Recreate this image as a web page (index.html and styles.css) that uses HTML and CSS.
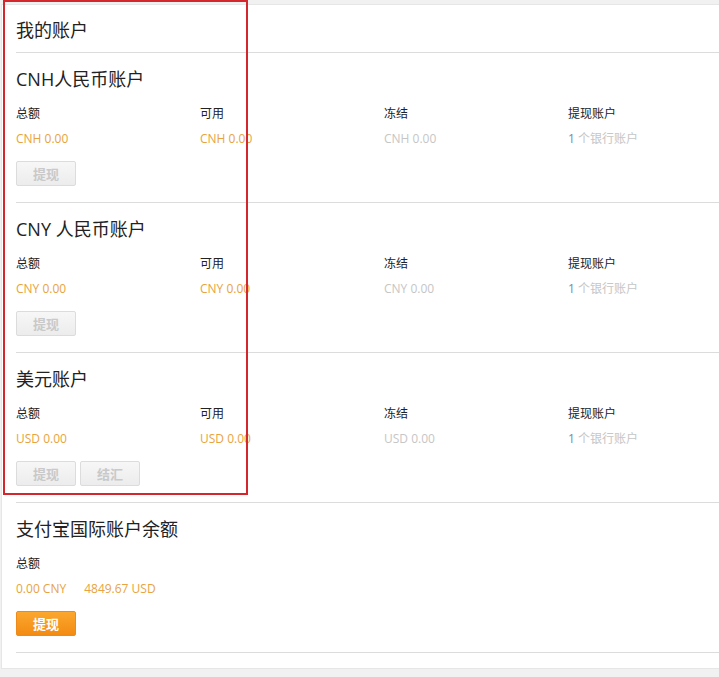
FILE: index.html
```html
<!DOCTYPE html>
<html lang="zh-CN">
<head>
<meta charset="utf-8">
<title>我的账户</title>
<link rel="stylesheet" href="styles.css">
</head>
<body>
<div class="panel">
  <div class="title">我的账户</div>

  <section class="acct">
    <h2 class="acct-name">CNH人民币账户</h2>
    <div class="grid">
      <div class="label">总额</div>
      <div class="label">可用</div>
      <div class="label">冻结</div>
      <div class="label">提现账户</div>
      <div class="val orange">CNH 0.00</div>
      <div class="val orange">CNH 0.00</div>
      <div class="val grey">CNH 0.00</div>
      <div class="val grey"><span class="num">1</span> 个银行账户</div>
    </div>
    <div class="btns"><span class="btn disabled">提现</span></div>
  </section>

  <section class="acct">
    <h2 class="acct-name">CNY 人民币账户</h2>
    <div class="grid">
      <div class="label">总额</div>
      <div class="label">可用</div>
      <div class="label">冻结</div>
      <div class="label">提现账户</div>
      <div class="val orange">CNY 0.00</div>
      <div class="val orange">CNY 0.00</div>
      <div class="val grey">CNY 0.00</div>
      <div class="val grey"><span class="num">1</span> 个银行账户</div>
    </div>
    <div class="btns"><span class="btn disabled">提现</span></div>
  </section>

  <section class="acct">
    <h2 class="acct-name">美元账户</h2>
    <div class="grid">
      <div class="label">总额</div>
      <div class="label">可用</div>
      <div class="label">冻结</div>
      <div class="label">提现账户</div>
      <div class="val orange">USD 0.00</div>
      <div class="val orange">USD 0.00</div>
      <div class="val grey">USD 0.00</div>
      <div class="val grey"><span class="num">1</span> 个银行账户</div>
    </div>
    <div class="btns"><span class="btn disabled">提现</span><span class="btn disabled">结汇</span></div>
  </section>

  <section class="acct">
    <h2 class="acct-name">支付宝国际账户余额</h2>
    <div class="label">总额</div>
    <div class="val orange totals"><span>0.00 CNY</span><span>4849.67 USD</span></div>
    <div class="btns"><span class="btn primary">提现</span></div>
  </section>
</div>
<div class="highlight"></div>
</body>
</html>
```

FILE: styles.css
```css
html, body {
  margin: 0;
  padding: 0;
}
body {
  background: #f1f1f1;
  font-family: "Open Sans", "Noto Sans CJK SC", sans-serif;
  color: #333;
  position: relative;
  height: 677px;
  overflow: hidden;
}
.panel {
  margin: 4px 0 0 1px;
  background: #fff;
  border: 1px solid #e6e6e6;
  border-right: none;
  padding: 0 0 15px 14px;
}
.title {
  font-size: 18px;
  line-height: 24px;
  padding: 13px 0 10px;
  border-bottom: 1px solid #dcdcdc;
  color: #222;
}
.acct {
  padding-bottom: 16px;
  border-bottom: 1px solid #dcdcdc;
}
.acct-name {
  margin: 14px 0 0;
  font-size: 18px;
  line-height: 24px;
  font-weight: normal;
  color: #222;
}
.grid {
  display: grid;
  grid-template-columns: repeat(4, 184px);
  row-gap: 7px;
  margin-top: 14px;
}
.acct > .label {
  margin-top: 14px;
}
.label {
  font-size: 12px;
  line-height: 18px;
  color: #222;
}
.val {
  font-size: 12px;
  line-height: 18px;
}
.totals {
  margin-top: 7px;
  display: flex;
  gap: 18px;
}
.orange { color: #e8a33e; }
.grey { color: #c6c6c6; }
.num { color: #6f8db0; }
.btns {
  display: flex;
  gap: 4px;
  margin-top: 13px;
}
.btn {
  box-sizing: border-box;
  width: 60px;
  height: 25px;
  line-height: 23px;
  text-align: center;
  font-size: 13px;
  font-weight: bold;
  border-radius: 2px;
  font-family: "Noto Sans CJK SC", sans-serif;
}
.btn.disabled {
  color: #c9c9c9;
  background: linear-gradient(#f7f7f7, #ececec);
  border: 1px solid #dcdcdc;
}
.btn.primary {
  color: #fff;
  background: linear-gradient(#fba72e, #f38b12);
  border: 1px solid #ec8a1c;
}
.highlight {
  position: absolute;
  left: 3px;
  top: 0;
  width: 245px;
  height: 495px;
  box-sizing: border-box;
  border: 2px solid #d4272d;
}
```
